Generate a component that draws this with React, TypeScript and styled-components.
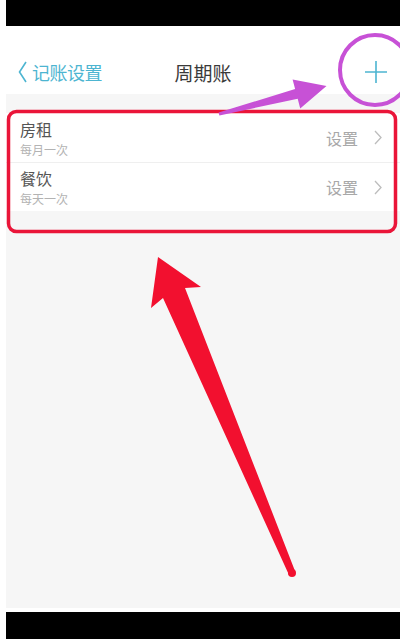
import styled, { createGlobalStyle } from 'styled-components'

const GlobalStyle = createGlobalStyle`
  html, body {
    margin: 0;
    padding: 0;
    background: #fff;
  }
  body {
    font-family: "Noto Sans CJK SC", "Noto Sans", sans-serif;
  }
`

const Page = styled.div`
  position: relative;
  width: 408px;
  height: 639px;
  padding: 0 8px 0 6px;
  box-sizing: border-box;
  display: flex;
  flex-direction: column;
  overflow: hidden;
`

const BlackBar = styled.div<{ $h: number; $gap?: number }>`
  height: ${(p) => p.$h}px;
  margin-top: ${(p) => p.$gap || 0}px;
  background: #000;
  flex-shrink: 0;
`

const StatusSpace = styled.div`
  height: 24px;
  background: #fff;
`

const NavBar = styled.div`
  height: 44px;
  background: #fff;
  display: grid;
  grid-template-columns: 1fr auto 1fr;
  align-items: center;
`

const BackLink = styled.div`
  display: flex;
  align-items: center;
  gap: 5px;
  padding-left: 12px;
  color: #4db5d1;
  font-size: 18px;
  letter-spacing: -0.5px;
`

const Title = styled.div`
  font-size: 19px;
  color: #3a3a3a;
`

const AddButton = styled.div`
  justify-self: end;
  padding-right: 13px;
  display: flex;
  align-items: center;
`

const Content = styled.div`
  flex: 1;
  background: #f6f6f6;
  padding-top: 19px;
`

const List = styled.div`
  background: #fff;
`

const Row = styled.div<{ $divider?: boolean }>`
  height: 49px;
  display: flex;
  align-items: center;
  padding: 0 18px 0 14px;
  border-top: ${(p) => (p.$divider ? '1px solid #efefef' : 'none')};
  box-sizing: border-box;
`

const RowText = styled.div`
  flex: 1;
  display: flex;
  flex-direction: column;
`

const RowTitle = styled.div`
  font-size: 16px;
  line-height: 23px;
  color: #555;
`

const RowSub = styled.div`
  font-size: 12px;
  line-height: 17px;
  color: #b3b3b3;
`

const RowAction = styled.div`
  font-size: 16px;
  color: #a8a8a8;
  margin-right: 16px;
`

const Overlay = styled.svg`
  position: absolute;
  top: 0;
  left: 0;
  pointer-events: none;
`

const items = [
  { name: '房租', freq: '每月一次' },
  { name: '餐饮', freq: '每天一次' },
]

export default function App() {
  return (
    <>
      <GlobalStyle />
      <Page>
        <BlackBar $h={26} />
        <StatusSpace />
        <NavBar>
          <BackLink>
            <svg width="9" height="22" viewBox="0 0 9 22">
              <path d="M8 1 L1.5 11 L8 21" fill="none" stroke="#4db5d1" strokeWidth="1.6" />
            </svg>
            记账设置
          </BackLink>
          <Title>周期账</Title>
          <AddButton>
            <svg width="22" height="22" viewBox="0 0 22 22">
              <path d="M11 0 V22 M0 11 H22" stroke="#4db5d1" strokeWidth="1.6" />
            </svg>
          </AddButton>
        </NavBar>
        <Content>
          <List>
            {items.map((it, i) => (
              <Row key={it.name} $divider={i > 0}>
                <RowText>
                  <RowTitle>{it.name}</RowTitle>
                  <RowSub>{it.freq}</RowSub>
                </RowText>
                <RowAction>设置</RowAction>
                <svg width="8" height="15" viewBox="0 0 8 15">
                  <path d="M1 1 L7 7.5 L1 14" fill="none" stroke="#bdbdbd" strokeWidth="1.3" />
                </svg>
              </Row>
            ))}
          </List>
        </Content>
        <BlackBar $h={27} $gap={4} />
        <Overlay width="408" height="639" viewBox="0 0 408 639">
          <defs>
            <clipPath id="frame">
              <rect x="6" y="26" width="394" height="582" />
            </clipPath>
          </defs>
          <rect x="8.5" y="111.5" width="387" height="120" rx="8" fill="none" stroke="#ea1539" strokeWidth="3.5" />
          <g clipPath="url(#frame)">
            <circle cx="375" cy="70" r="35" fill="none" stroke="#c751d6" strokeWidth="4" />
          </g>
          <polygon
            points="218.6,112.5 295.1,89.1 292.6,79.4 326.5,86.1 300.2,108.4 297.7,98.7 219.4,115.5"
            fill="#c751d6"
          />
          <polygon
            points="158,257 201,287 185,288 295,571 289,575 163,298 151,308"
            fill="#f2102f"
          />
          <circle cx="292" cy="573" r="4" fill="#f2102f" />
        </Overlay>
      </Page>
    </>
  )
}
